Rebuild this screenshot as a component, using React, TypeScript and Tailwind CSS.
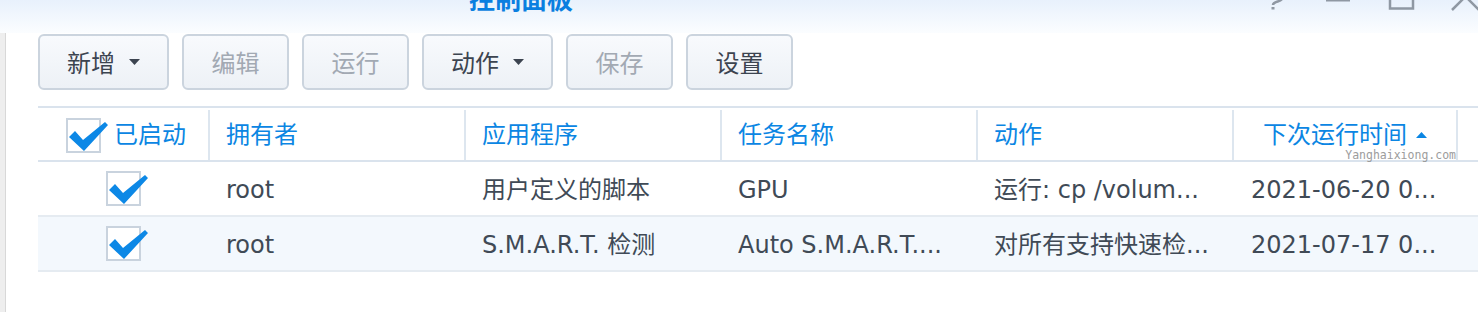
import React from 'react';

const font = { fontFamily: '"DejaVu Sans", "Noto Sans CJK SC", sans-serif' };

function Caret({ up = false, color = '#3c4450' }: { up?: boolean; color?: string }) {
  return (
    <svg width="11" height="6" viewBox="0 0 11 6" className="shrink-0">
      <path d={up ? 'M0,6 L5.5,0 L11,6 Z' : 'M0,0 L11,0 L5.5,6 Z'} fill={color} />
    </svg>
  );
}

function Check() {
  return (
    <div className="relative w-[35px] h-[35px] shrink-0 border-2 border-[#c9d3de] bg-white">
      <svg width="44" height="36" viewBox="0 0 44 36" className="absolute left-[-2px] top-[-2px] overflow-visible">
        <path d="M3,19 L9,13 L17,22 L39,4 L42,7 L18,33 Z" fill="#0c88e6" />
      </svg>
    </div>
  );
}

function ToolButton({ label, caret, disabled, w }: { label: string; caret?: boolean; disabled?: boolean; w: string }) {
  return (
    <button
      className={`${w} h-[56px] flex items-center justify-center gap-[14px] rounded-[6px] border-2 border-[#cbd4de] bg-linear-to-b from-[#f8fafd] to-[#edf1f6] text-[24px] leading-none ${
        disabled ? 'text-[#a2a9b3]' : 'text-[#3c4450]'
      }`}
    >
      <span className="pt-[3px]">{label}</span>
      {caret && <Caret />}
    </button>
  );
}

const rows = [
  { owner: 'root', app: '用户定义的脚本', task: 'GPU', action: '运行: cp /volum...', next: '2021-06-20 0...', alt: false },
  { owner: 'root', app: 'S.M.A.R.T. 检测', task: 'Auto S.M.A.R.T....', action: '对所有支持快速检...', next: '2021-07-17 0...', alt: true },
];

export default function App() {
  return (
    <div className="w-[1478px] h-[312px] overflow-hidden bg-white" style={font}>
      {/* title bar */}
      <div className="h-[33px] flex items-start bg-linear-to-b from-[#e8f1fc] to-[#fbfdff] overflow-hidden">
        <div className="ml-[469px] -mt-[13px] text-[26px] leading-none font-bold text-[#0a7fe0]">控制面板</div>
        <div className="flex-1" />
        <svg width="208" height="33" viewBox="0 0 208 33" className="shrink-0">
          <g stroke="#8f98a3" strokeWidth="2.5" fill="none">
            <path d="M0.5,-4 C1,-8 13,-8 12.5,-2 C12,2 3,1 3,5" />
            <rect x="120" y="-6" width="23" height="14.5" />
            <path d="M182,10 L208,-16 M209,10 L183,-16" />
          </g>
          <rect x="1.5" y="7" width="3" height="2.5" fill="#8f98a3" />
          <rect x="56" y="-1" width="24" height="2.5" fill="#8f98a3" />
        </svg>
      </div>

      <div className="flex h-[279px]">
        {/* left edge */}
        <div className="w-[6px] shrink-0 bg-[#eeeeee] border-r border-[#d8d8d8]" />

        <div className="flex-1 pl-[32px] pt-[1px]">
          {/* toolbar */}
          <div className="flex gap-[13px]">
            <ToolButton label="新增" caret w="w-[131px]" />
            <ToolButton label="编辑" disabled w="w-[107px]" />
            <ToolButton label="运行" disabled w="w-[107px]" />
            <ToolButton label="动作" caret w="w-[131px]" />
            <ToolButton label="保存" disabled w="w-[107px]" />
            <ToolButton label="设置" w="w-[107px]" />
          </div>

          {/* table */}
          <div className="mt-[16px] w-[1500px] border-t-2 border-[#dae3ed] text-[24px] leading-none">
            <div className="flex h-[54px] pt-[2px] border-b-2 border-[#dae3ed] text-[#0b86e3]">
              <div className="w-[172px] shrink-0 flex items-center pl-[28px] border-r-2 border-[#dde6ef]">
                <Check />
                <span className="ml-[13px]">已启动</span>
              </div>
              <div className="w-[256px] shrink-0 flex items-center pl-[16px] border-r-2 border-[#dde6ef]">拥有者</div>
              <div className="w-[256px] shrink-0 flex items-center pl-[16px] border-r-2 border-[#dde6ef]">应用程序</div>
              <div className="w-[256px] shrink-0 flex items-center pl-[16px] border-r-2 border-[#dde6ef]">任务名称</div>
              <div className="w-[256px] shrink-0 flex items-center pl-[16px] border-r-2 border-[#dde6ef]">动作</div>
              <div className="relative w-[224px] shrink-0 flex items-center justify-center gap-[9px] border-r-2 border-[#dde6ef]">
                <span>下次运行时间</span>
                <Caret up color="#0b86e3" />
                <span
                  className="absolute right-[0px] bottom-[-2px] text-[11.5px] leading-[13px] text-[#9c9c9c]"
                  style={{ fontFamily: '"DejaVu Sans Mono", monospace' }}
                >
                  Yanghaixiong.com
                </span>
              </div>
              <div className="flex-1" />
            </div>

            {rows.map((r, i) => (
              <div
                key={i}
                className={`flex h-[55px] border-b-2 border-[#e5ebf1] text-[#404a56] ${r.alt ? 'bg-[#f3f8fd]' : 'bg-white'}`}
              >
                <div className="w-[172px] shrink-0 flex items-center justify-center pr-[2px]">
                  <Check />
                </div>
                <div className="w-[256px] shrink-0 flex items-center pt-[3px] pl-[16px]">{r.owner}</div>
                <div className="w-[256px] shrink-0 flex items-center pt-[3px] pl-[16px]">{r.app}</div>
                <div className="w-[256px] shrink-0 flex items-center pt-[3px] pl-[16px]">{r.task}</div>
                <div className="w-[256px] shrink-0 flex items-center pt-[3px] pl-[16px]">{r.action}</div>
                <div className="w-[224px] shrink-0 flex items-center pt-[3px] pl-[17px]">{r.next}</div>
                <div className="flex-1" />
              </div>
            ))}
          </div>
        </div>
      </div>
    </div>
  );
}
